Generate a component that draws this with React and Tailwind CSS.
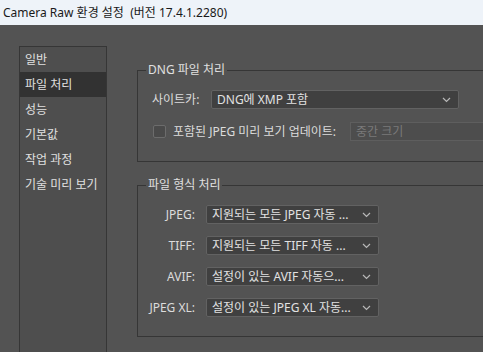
import React from 'react';

const font = { fontFamily: '"Noto Sans", "Noto Sans CJK KR", sans-serif' };

function Chevron() {
  return (
    <svg width="9" height="6" viewBox="0 0 9 6" className="shrink-0">
      <path d="M1 1 L4.5 4.5 L8 1" fill="none" stroke="#b8b8b8" strokeWidth="1.2" />
    </svg>
  );
}

function Select({ value, className }) {
  return (
    <div className={`h-[19px] flex items-center justify-between pl-[5px] pr-[7px] bg-[#404040] border border-[#626262] rounded-[2px] text-[12px] text-[#e2e2e2] ${className}`}>
      <span className="leading-none whitespace-nowrap">{value}</span>
      <Chevron />
    </div>
  );
}

export default function App() {
  const menu = ['일반', '파일 처리', '성능', '기본값', '작업 과정', '기술 미리 보기'];
  const formats = [
    ['JPEG:', '지원되는 모든 JPEG 자동 ...'],
    ['TIFF:', '지원되는 모든 TIFF 자동 ...'],
    ['AVIF:', '설정이 있는 AVIF 자동으...'],
    ['JPEG XL:', '설정이 있는 JPEG XL 자동...'],
  ];

  return (
    <div className="w-[483px] h-[352px] overflow-hidden bg-[#535353] flex flex-col" style={font}>
      {/* Title bar */}
      <div className="h-[25px] shrink-0 bg-[#eef3f9] flex items-center px-[3px]">
        <span className="text-[12px] text-[#1a1a1a] whitespace-pre leading-none">Camera Raw 환경 설정  (버전 17.4.1.2280)</span>
      </div>

      <div className="flex-1 flex pl-[19px] pt-[21px] min-h-0">
        {/* Sidebar */}
        <div className="w-[88px] shrink-0 bg-[#4e4e4e] border-l border-t border-r border-[#363636] flex flex-col">
          {menu.map((m, i) => (
            <div
              key={m}
              className={`h-[25px] flex items-center pl-[5px] text-[12px] text-[#e0e0e0] whitespace-nowrap ${i === 1 ? 'bg-[#323232]' : ''}`}
            >
              {m}
            </div>
          ))}
        </div>

        {/* Content */}
        <div className="w-[400px] shrink-0 ml-[30px] pt-[16px]">
          <fieldset className="w-[400px] border border-[#363636] m-0 p-0 pb-[20px]">
            <legend className="ml-[8px] px-[2px] text-[12px] leading-[16px] text-[#e0e0e0]">DNG 파일 처리</legend>
            <div className="mt-[12px] flex items-center pl-[14px]">
              <span className="w-[59px] text-[12px] text-[#dcdcdc]">사이트카:</span>
              <Select value="DNG에 XMP 포함" className="w-[248px]" />
            </div>
            <div className="mt-[13px] flex items-center pl-[15px]">
              <div className="w-[13px] h-[13px] border border-[#6c6c6c] bg-[#4a4a4a] rounded-[2px] shrink-0" />
              <span className="ml-[7px] w-[177px] shrink-0 text-[12px] text-[#dcdcdc] whitespace-nowrap">포함된 JPEG 미리 보기 업데이트:</span>
              <div className="h-[19px] w-[170px] shrink-0 bg-[#4d4d4d] border border-[#5e5e5e] flex items-center pl-[5px] text-[12px] text-[#7a7a7a] whitespace-nowrap">중간 크기</div>
            </div>
          </fieldset>

          <fieldset className="mt-[15px] w-[400px] border border-[#363636] m-0 p-0 pb-[19px]">
            <legend className="ml-[8px] px-[2px] text-[12px] leading-[16px] text-[#e0e0e0]">파일 형식 처리</legend>
            <div className="mt-[12px] flex flex-col gap-[12px]">
              {formats.map(([label, value]) => (
                <div key={label} className="flex items-center">
                  <span className="w-[57px] text-right text-[12px] text-[#dcdcdc] whitespace-nowrap">{label}</span>
                  <Select value={value} className="ml-[11px] w-[173px]" />
                </div>
              ))}
            </div>
          </fieldset>
        </div>
      </div>
    </div>
  );
}
